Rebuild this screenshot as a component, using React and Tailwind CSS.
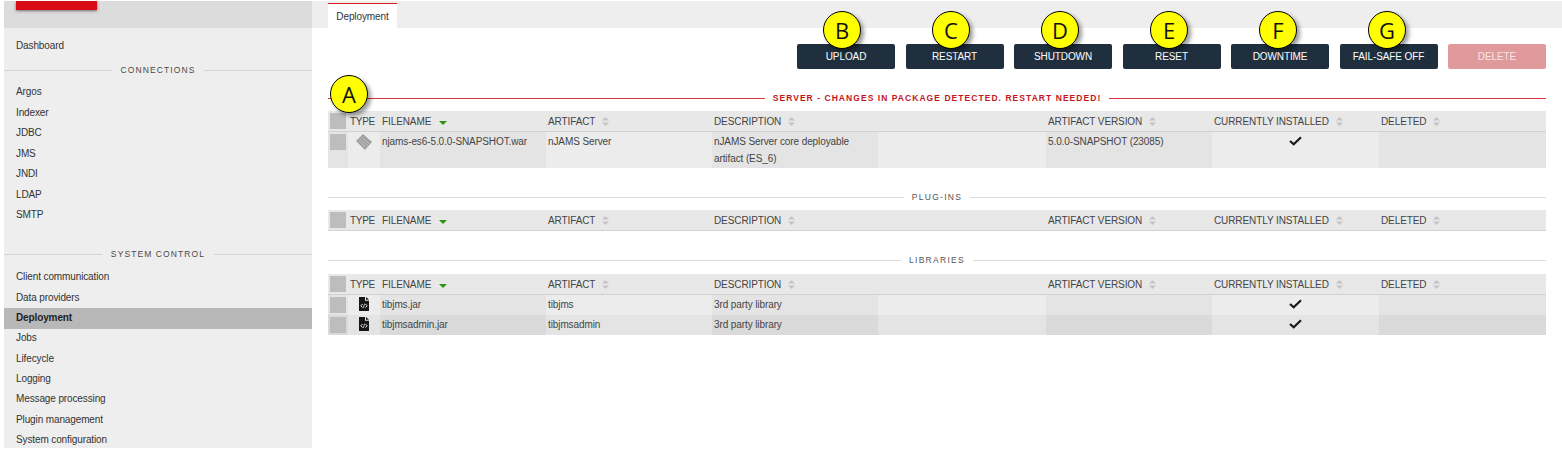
import React from 'react';

const COLS = 'grid grid-cols-[20px_32px_166px_166px_166px_168px_166px_167px_167px]';

const connections = ['Argos', 'Indexer', 'JDBC', 'JMS', 'JNDI', 'LDAP', 'SMTP'];
const systemControl = ['Client communication', 'Data providers', 'Deployment', 'Jobs', 'Lifecycle', 'Logging', 'Message processing', 'Plugin management', 'System configuration'];
const buttons = ['UPLOAD', 'RESTART', 'SHUTDOWN', 'RESET', 'DOWNTIME', 'FAIL-SAFE OFF'];

const badges = [
    { label: 'A', pos: 'left-[330px] top-[75px]' },
    { label: 'B', pos: 'left-[823px] top-[11px]' },
    { label: 'C', pos: 'left-[932px] top-[11px]' },
    { label: 'D', pos: 'left-[1041px] top-[11px]' },
    { label: 'E', pos: 'left-[1150px] top-[11px]' },
    { label: 'F', pos: 'left-[1259px] top-[11px]' },
    { label: 'G', pos: 'left-[1368px] top-[11px]' },
];

const SortBoth = () => (
    <svg width="7" height="9" viewBox="0 0 7 9" className="ml-[7px] shrink-0">
        <path d="M3.5 0 L7 3.6 H0 Z" fill="#c4c4c4" />
        <path d="M3.5 9 L7 5.4 H0 Z" fill="#c4c4c4" />
    </svg>
);

const SortDown = () => (
    <svg width="8" height="4" viewBox="0 0 8 4" className="ml-[8px] mt-[3px] shrink-0">
        <path d="M0 0 H8 L4 4 Z" fill="#2f9414" />
    </svg>
);

const WarIcon = () => (
    <svg width="18" height="18" viewBox="0 0 18 18" className="mt-[1px]">
        <path d="M8 1 L17 9 L10 17 L1 8 Z" fill="#a0a0a0" />
        <path d="M5 5.5 L12.5 13 M7 4 L14 11 M3.5 7 L10.5 14.5" stroke="#cfcfcf" strokeWidth="0.7" />
    </svg>
);

const JarIcon = () => (
    <svg width="10" height="14" viewBox="0 0 10 14" className="mt-[2px]">
        <path d="M0 0 H6 V3.8 H10 V14 H0 Z" fill="#161616" />
        <path d="M7 0 L10 2.8 H7 Z" fill="#161616" />
        <path d="M3.6 7 L1.8 8.8 L3.6 10.6 M6.4 7 L8.2 8.8 L6.4 10.6" stroke="#fff" strokeWidth="0.9" fill="none" />
        <path d="M5.6 6.7 L4.4 10.9" stroke="#fff" strokeWidth="0.7" />
    </svg>
);

const Check = () => (
    <svg width="13" height="10" viewBox="0 0 13 10" className="mx-auto mt-[3px]">
        <path d="M1 5 L4.7 8.3 L12 1.2" stroke="#1a1a1a" strokeWidth="2.2" fill="none" />
    </svg>
);

const SideDivider = ({ label, className }) => (
    <div className={`flex items-center gap-[9px] h-[12px] ${className}`}>
        <div className="flex-1 h-px bg-[#d4d4d4]" />
        <span className="text-[8.5px] tracking-[1.1px] text-[#4a4a4a] whitespace-nowrap">{label}</span>
        <div className="flex-1 h-px bg-[#d4d4d4]" />
    </div>
);

const SideItem = ({ label, active, className }) => (
    <div className={`pl-[12px] pb-[2px] flex items-center text-[10px] tracking-[-0.12px] ${className} ${active ? 'bg-[#b8b8b8] font-bold text-[#222]' : 'text-[#333]'}`}>
        {label}
    </div>
);

const SectionTitle = ({ label, danger, className }) => (
    <div className={`flex items-center gap-[8px] h-[12px] ${className}`}>
        <div className={`flex-1 h-px ${danger ? 'bg-[#d9343c]' : 'bg-[#dcdcdc]'}`} />
        <span className={`text-[8.5px] whitespace-nowrap ${danger ? 'tracking-[1.05px] font-bold text-[#c4161c]' : 'tracking-[1.3px] text-[#555]'}`}>{label}</span>
        <div className={`flex-1 h-px ${danger ? 'bg-[#d9343c]' : 'bg-[#dcdcdc]'}`} />
    </div>
);

const HeadCell = ({ label, sort }) => (
    <div className="flex items-center pl-[2px] text-[10px] tracking-[-0.1px] text-[#444] whitespace-nowrap">
        {label}
        {sort === 'down' ? <SortDown /> : <SortBoth />}
    </div>
);

const TableHead = () => (
    <div className={`${COLS} h-[21px] bg-[#e8e8e8] border-b border-[#d2d2d2]`}>
        <div className="pl-[2px] pt-[2px]">
            <div className="w-[16px] h-[16px] bg-[#bdbdbd]" />
        </div>
        <div className="flex items-center pl-[2px] text-[10px] tracking-[-0.3px] text-[#444]">TYPE</div>
        <HeadCell label="FILENAME" sort="down" />
        <HeadCell label="ARTIFACT" />
        <HeadCell label="DESCRIPTION" />
        <div />
        <HeadCell label="ARTIFACT VERSION" />
        <HeadCell label="CURRENTLY INSTALLED" />
        <HeadCell label="DELETED" />
    </div>
);

const Row = ({ icon, filename, artifact, description, version, installed, tall, shade }) => {
    const dark = shade ? 'bg-[#dadada]' : 'bg-[#e4e4e4]';
    const light = shade ? 'bg-[#e4e4e4]' : 'bg-[#ececec]';
    return (
        <div className={`${COLS} ${tall ? 'h-[36px]' : 'h-[20px]'} text-[10px] tracking-[-0.1px] text-[#444] leading-[16.5px]`}>
            <div className={`pl-[2px] pt-[2px] ${dark}`}>
                <div className="w-[16px] h-[16px] bg-[#bdbdbd]" />
            </div>
            <div className={`flex justify-center ${light}`}>{icon}</div>
            <div className={`pl-[2px] pt-[2px] ${dark}`}>{filename}</div>
            <div className={`pl-[2px] pt-[2px] ${light}`}>{artifact}</div>
            <div className={`pl-[2px] pt-[2px] pr-[16px] ${dark}`}>{description}</div>
            <div className={light} />
            <div className={`pl-[2px] pt-[2px] ${dark}`}>{version}</div>
            <div className={`pt-[1px] ${light}`}>{installed && <Check />}</div>
            <div className={dark} />
        </div>
    );
};

export default function App() {
    return (
        <div className="relative h-[449px] w-[1562px] overflow-hidden bg-white pt-px font-['Liberation_Sans',Arial,sans-serif]">
            <div className="flex h-[447px]">
                <aside className="w-[308px] ml-[4px] bg-[#eeeeee] overflow-hidden shrink-0">
                    <div className="h-[27px] bg-[#dcdcdc] pl-[12px]">
                        <div className="w-[81px] h-[9px] bg-[#d70a16] shadow-[0_1px_3px_rgba(0,0,0,0.5)]" />
                    </div>
                    <div className="mt-[8px]">
                        <SideItem label="Dashboard" className="h-[20.3px]" />
                    </div>
                    <SideDivider label="CONNECTIONS" className="mt-[8px]" />
                    <div className="mt-[6px]">
                        {connections.map((item) => <SideItem key={item} label={item} className="h-[20.5px]" />)}
                    </div>
                    <SideDivider label="SYSTEM CONTROL" className="mt-[22.5px]" />
                    <div className="mt-[7.5px]">
                        {systemControl.map((item) => <SideItem key={item} label={item} className="h-[20.3px]" active={item === 'Deployment'} />)}
                    </div>
                </aside>

                <main className="flex-1 min-w-0">
                    <div className="h-[27px] bg-[#eeeeee] pl-[16px] pt-[2px]">
                        <div className="w-[69px] h-[25px] bg-white border-t border-[#d71920] flex items-center justify-center text-[10px] tracking-[-0.1px] text-[#333]">
                            Deployment
                        </div>
                    </div>

                    <div className="w-[1218px] ml-[16px]">
                        <div className="flex justify-end gap-[10.5px] mt-[16px]">
                            {buttons.map((label) => (
                                <button key={label} className="w-[98px] h-[25px] bg-[#1f2f3e] rounded-[2px] text-[10px] tracking-[-0.1px] text-white">
                                    {label}
                                </button>
                            ))}
                            <button className="w-[98px] h-[25px] bg-[#e19a9c] rounded-[2px] text-[10px] tracking-[-0.1px] text-[#f7e4e4]">DELETE</button>
                        </div>

                        <SectionTitle danger label="SERVER - CHANGES IN PACKAGE DETECTED. RESTART NEEDED!" className="mt-[23px]" />
                        <div className="mt-[7px]">
                            <TableHead />
                            <Row
                                tall
                                icon={<WarIcon />}
                                filename="njams-es6-5.0.0-SNAPSHOT.war"
                                artifact="nJAMS Server"
                                description="nJAMS Server core deployable artifact (ES_6)"
                                version="5.0.0-SNAPSHOT (23085)"
                                installed
                            />
                        </div>

                        <SectionTitle label="PLUG-INS" className="mt-[23px]" />
                        <div className="mt-[7px]">
                            <TableHead />
                        </div>

                        <SectionTitle label="LIBRARIES" className="mt-[23px]" />
                        <div className="mt-[8px]">
                            <TableHead />
                            <Row icon={<JarIcon />} filename="tibjms.jar" artifact="tibjms" description="3rd party library" installed />
                            <Row shade icon={<JarIcon />} filename="tibjmsadmin.jar" artifact="tibjmsadmin" description="3rd party library" installed />
                        </div>
                    </div>
                </main>
            </div>

            {badges.map((b) => (
                <div
                    key={b.label}
                    className={`absolute ${b.pos} w-[38px] h-[38px] rounded-full bg-[#ffff00] border border-black shadow-[3px_3px_4px_rgba(0,0,0,0.4)] flex items-center justify-center text-[22px] text-[#111] font-['Open_Sans',sans-serif]`}
                >
                    {b.label}
                </div>
            ))}
        </div>
    );
}
